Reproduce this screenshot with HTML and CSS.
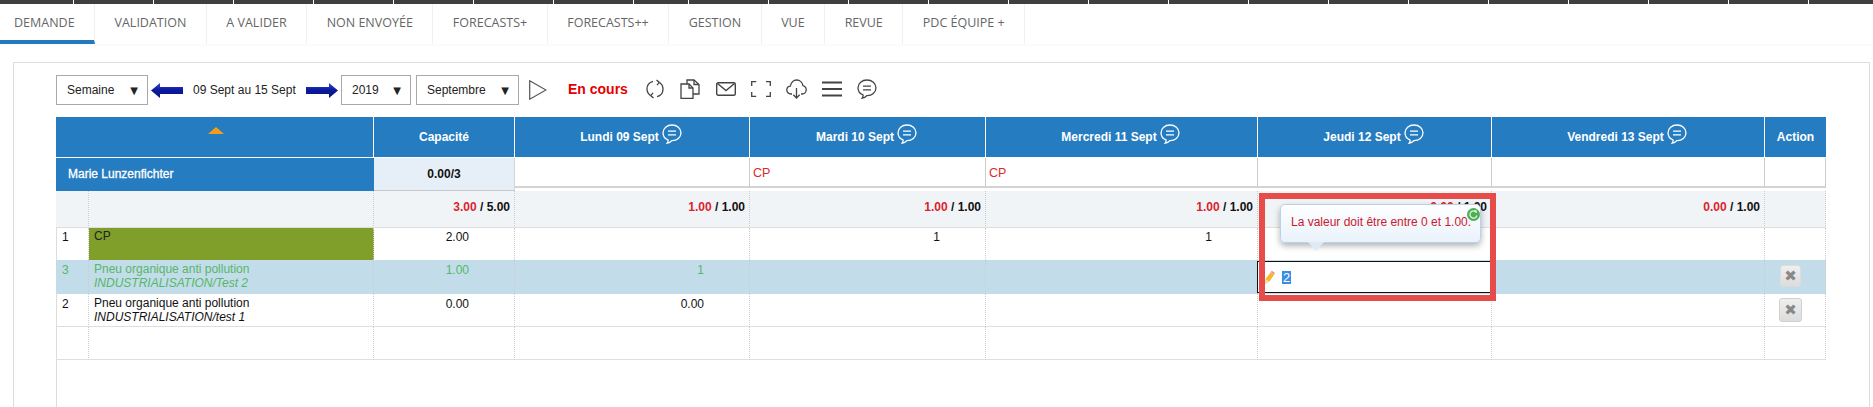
FILE: index.html
```html
<!DOCTYPE html>
<html lang="fr">
<head>
<meta charset="utf-8">
<title>Demande</title>
<link rel="stylesheet" href="styles.css">
</head>
<body>
<svg class="defs" width="0" height="0" aria-hidden="true">
  <defs>
    <linearGradient id="arrowFill" x1="0" y1="0" x2="0" y2="1">
      <stop offset="0" stop-color="#3a49c8"/>
      <stop offset="0.45" stop-color="#0b1aa2"/>
      <stop offset="1" stop-color="#0a1478"/>
    </linearGradient>
    <symbol id="chat" viewBox="0 0 20 20">
      <path d="M10 1C5 1 1 4.200 1 8.800c0 3.400 2.100 6 5 7.100.2 1 0 2.200-.8 3.300 1.900-.3 3.500-1.300 4.600-2.600 5.200.2 9.200-3.300 9.200-7.800C19 4.300 15 1 10 1z" fill="none" stroke="currentColor" stroke-width="1.300"/>
      <path d="M6 7.200h8M6 10.800h8" fill="none" stroke="currentColor" stroke-width="1.300"/>
    </symbol>
  </defs>
</svg>

<div class="topbar"><span class="ticks-a"></span><span class="ticks-b"></span></div>

<nav class="tabs">
  <a class="tab active">DEMANDE</a>
  <a class="tab">VALIDATION</a>
  <a class="tab">A VALIDER</a>
  <a class="tab">NON ENVOYÉE</a>
  <a class="tab">FORECASTS+</a>
  <a class="tab">FORECASTS++</a>
  <a class="tab">GESTION</a>
  <a class="tab">VUE</a>
  <a class="tab">REVUE</a>
  <a class="tab">PDC ÉQUIPE +</a>
</nav>

<main class="panel">
  <div class="toolbar">
    <div class="select sel-week"><span>Semaine</span><span class="caret">▼</span></div>
    <svg class="arrow arrow-prev" width="32" height="15" viewBox="0 0 32 15"><path d="M0 7.500 9 0v4h23v7H9v4z" fill="url(#arrowFill)"/></svg>
    <span class="range">09 Sept au 15 Sept</span>
    <svg class="arrow arrow-next" width="32" height="15" viewBox="0 0 32 15"><path d="M32 7.500 23 0v4H0v7h23v4z" fill="url(#arrowFill)"/></svg>
    <div class="select sel-year"><span>2019</span><span class="caret">▼</span></div>
    <div class="select sel-month"><span>Septembre</span><span class="caret">▼</span></div>
    <svg class="play" width="18" height="20" viewBox="0 0 18 20"><path d="M.7.800 17 10 .7 19.200z" fill="none" stroke="#555" stroke-width="1.200"/></svg>
    <span class="status">En cours</span>
    <svg class="tool t-refresh" width="18" height="20" viewBox="0 0 18 20" fill="none" stroke="#444" stroke-width="1.300"><path d="M7 2.300C3.500 3.200 1 6.300 1 10c0 2.700 1.300 5 3.400 6.500"/><path d="M11 17.700c3.500-.9 6-4 6-7.700 0-2.700-1.300-5-3.400-6.500"/><path d="M10.500 1 13.300 3.400 11 6.200"/><path d="M7.500 19 4.700 16.600 7 13.800"/></svg>
    <svg class="tool t-doc" width="20" height="20" viewBox="0 0 20 20" fill="none" stroke="#444" stroke-width="1.300"><path d="M1 5h8l4 4v10.300H1z"/><path d="M9 5v4h4"/><path d="M7 5V1h7l5 4.500V15h-6"/><path d="M14 1v4.500h5"/></svg>
    <svg class="tool t-mail" width="20" height="14" viewBox="0 0 20 14" fill="none" stroke="#444" stroke-width="1.400"><rect x=".7" y=".7" width="18.600" height="12.600" rx="1.500"/><path d="M1.500 1.500 10 8.500l8.500-7"/></svg>
    <svg class="tool t-full" width="20" height="16" viewBox="0 0 20 16" fill="none" stroke="#444" stroke-width="1.300"><path d="M.7 5V.7h4.500M15 .7h4.300V5M19.300 11v4.300H15M5.200 15.300H.7V11"/></svg>
    <svg class="tool t-cloud" width="21" height="20" viewBox="0 0 21 20" fill="none" stroke="#444" stroke-width="1.300"><path d="M6 15H5C2.500 15 .8 13.200.8 11c0-2 1.500-3.700 3.500-3.900C4.900 3.600 7.500 1 10.700 1c3.300 0 5.800 2.500 6.200 5.600 2 .5 3.300 2.200 3.300 4.200 0 2.300-1.800 4.200-4.200 4.200H15"/><path d="M10.500 9v10M7.300 15.800l3.200 3.200 3.200-3.200"/></svg>
    <svg class="tool t-menu" width="20" height="16" viewBox="0 0 20 16" fill="none" stroke="#444" stroke-width="2"><path d="M0 1.500h20M0 8h20M0 14.500h20"/></svg>
    <svg class="tool t-chat" width="20" height="20"><use href="#chat"/></svg>
  </div>

  <div class="table-wrap">
    <table class="grid">
      <colgroup>
        <col class="c-num"><col class="c-name"><col class="c-cap"><col class="c-mon"><col class="c-tue"><col class="c-wed"><col class="c-thu"><col class="c-fri"><col class="c-act">
      </colgroup>
      <thead>
        <tr class="r-head">
          <th colspan="2" class="sort-cell"><span class="sort-up"></span></th>
          <th>Capacité</th>
          <th><span class="day">Lundi 09 Sept<svg class="day-chat" width="20" height="20"><use href="#chat"/></svg></span></th>
          <th><span class="day">Mardi 10 Sept<svg class="day-chat" width="20" height="20"><use href="#chat"/></svg></span></th>
          <th><span class="day">Mercredi 11 Sept<svg class="day-chat" width="20" height="20"><use href="#chat"/></svg></span></th>
          <th><span class="day">Jeudi 12 Sept<svg class="day-chat" width="20" height="20"><use href="#chat"/></svg></span></th>
          <th><span class="day">Vendredi 13 Sept<svg class="day-chat" width="20" height="20"><use href="#chat"/></svg></span></th>
          <th>Action</th>
        </tr>
      </thead>
      <tbody>
        <tr class="r-person">
          <td colspan="2" class="person">Marie Lunzenfichter</td>
          <td class="cap-total">0.00/3</td>
          <td><div class="absence"></div></td>
          <td><div class="absence">CP</div></td>
          <td><div class="absence">CP</div></td>
          <td><div class="absence"></div></td>
          <td><div class="absence"></div></td>
          <td><div class="absence"></div></td>
        </tr>
        <tr class="r-sum">
          <td></td><td></td>
          <td class="sum"><b class="used">3.00</b> / 5.00</td>
          <td class="sum"><b class="used">1.00</b> / 1.00</td>
          <td class="sum"><b class="used">1.00</b> / 1.00</td>
          <td class="sum"><b class="used">1.00</b> / 1.00</td>
          <td class="sum"><b class="used">0.00</b> / 1.00</td>
          <td class="sum"><b class="used">0.00</b> / 1.00</td>
          <td></td>
        </tr>
        <tr class="r-cp">
          <td class="idx">1</td>
          <td class="label cp-label">CP</td>
          <td class="num">2.00</td>
          <td class="num"></td>
          <td class="num">1</td>
          <td class="num">1</td>
          <td class="num"></td><td class="num"></td><td></td>
        </tr>
        <tr class="r-sel">
          <td class="idx">3</td>
          <td class="label">Pneu organique anti pollution<br><i>INDUSTRIALISATION/Test 2</i></td>
          <td class="num">1.00</td>
          <td class="num">1</td>
          <td class="num"></td>
          <td class="num"></td>
          <td class="edit-cell">
            <div class="editor">
              <svg class="pencil" width="10" height="13" viewBox="0 0 10 13"><path d="M0 13 .6 8 5.800 .9 9.300 3.400 4.200 10.800z" fill="#f5b82e"/><path d="M5.800 .9 6.300 .3c.4-.4.900-.4 1.300-.1l1.800 1.300c.4.400.4.900.1 1.300l-.2.600z" fill="#e58bb5"/><path d="M0 13 .6 8 4.200 10.800z" fill="#f7e3b0"/></svg>
              <span class="picked">2</span>
            </div>
          </td>
          <td class="num"></td>
          <td class="act"><button class="del sm">✖</button></td>
        </tr>
        <tr class="r-row">
          <td class="idx">2</td>
          <td class="label">Pneu organique anti pollution<br><i>INDUSTRIALISATION/test 1</i></td>
          <td class="num">0.00</td>
          <td class="num">0.00</td>
          <td class="num"></td><td class="num"></td><td class="num"></td><td class="num"></td>
          <td class="act"><button class="del">✖</button></td>
        </tr>
        <tr class="r-empty">
          <td></td><td></td><td></td><td></td><td></td><td></td><td></td><td></td><td></td>
        </tr>
      </tbody>
    </table>

    <div class="callout"></div>
    <div class="tip">
      <span>La valeur doit être entre 0 et 1.00.</span>
      <svg class="tip-ok" width="13" height="13" viewBox="0 0 13 13"><circle cx="6.500" cy="6.500" r="6.500" fill="#4cae55"/><path d="M9.500 4.500A3.600 3.600 0 1 0 10 7.500" fill="none" stroke="#d9f2dc" stroke-width="1.300"/><path d="M6.300 3.200 9.500 1.800l.3 3.400z" fill="#d9f2dc"/></svg>
    </div>
  </div>
</main>
</body>
</html>
```
FILE: styles.css
```css
* { box-sizing: border-box; }
html, body { height: 407px; margin: 0; overflow: hidden; }
body {
  display: flex;
  flex-direction: column;
  background: #fff;
  font: 12px/14px "Liberation Sans", Arial, sans-serif;
  color: #111;
}
.defs { position: absolute; }

.topbar { display: flex; height: 4px; flex: none; }
.ticks-a, .ticks-b {
  height: 100%;
  background-size: 80px 100%;
}
.ticks-a {
  width: 640px;
  background-image: linear-gradient(90deg, #3f3f3f 73px, #fff 73px, #fff 74px, #3f3f3f 74px);
}
.ticks-b {
  flex: 1;
  background-image: linear-gradient(90deg, #3f3f3f 48px, #fff 48px, #fff 49px, #3f3f3f 49px);
}

.tabs {
  display: flex;
  flex: none;
  height: 40px;
  background: #fff;
  box-shadow: 0 1px 3px rgba(0, 0, 0, .04);
}
.tab {
  display: flex;
  align-items: center;
  padding: 0 19.500px 3px;
  border-right: 1px solid #f0f0f0;
  font: 12.500px "Open Sans", sans-serif;
  color: #666;
}
.tab.active {
  padding-left: 14px;
  border-bottom: 4px solid #2379bd;
  padding-bottom: 0;
  width: 95px;
  padding-right: 0;
}

.panel {
  flex: 1;
  display: flex;
  flex-direction: column;
  margin: 18px 3px 0 13px;
  padding: 12px 42px 0;
  border: 1px solid #dcdcdc;
  border-bottom: 0;
  min-height: 0;
}
.toolbar { display: flex; align-items: center; height: 30px; flex: none; }
.select {
  display: flex;
  align-items: center;
  justify-content: space-between;
  height: 30px;
  padding: 0 9px 0 10px;
  border: 1px solid #a9a9a9;
  background: #fff;
  color: #222;
}
.sel-week { width: 92px; }
.sel-year { width: 70px; }
.sel-month { width: 103px; margin-left: 5px; }
.caret { font: 10px "DejaVu Sans", sans-serif; color: #222; }
.arrow-prev { margin-left: 3px; }
.range { margin-left: 10px; width: 103px; white-space: nowrap; color: #222; }
.arrow-next { margin: 0 3px 0 10px; }
.play { margin-left: 10px; margin-bottom: 0; }
.status {
  margin-left: 21px;
  width: 60px;
  font-size: 14px;
  font-weight: bold;
  color: #e40000;
  white-space: nowrap;
  margin-bottom: 2px;
}
.tool { flex: none; margin-bottom: 2px; }
.t-refresh { margin-left: 18px; }
.t-doc { margin-left: 16px; }
.t-mail { margin-left: 16px; }
.t-full { margin-left: 15px; }
.t-cloud { margin-left: 15px; }
.t-menu { margin-left: 15px; }
.t-chat { margin-left: 15px; color: #444; }

.table-wrap {
  position: relative;
  flex: 1;
  margin-top: 12px;
  background: linear-gradient(#dcdcdc, #dcdcdc) left top / 1px 100% no-repeat;
}
.grid {
  width: 1770px;
  table-layout: fixed;
  border-collapse: separate;
  border-spacing: 0;
}
.c-num { width: 33px; }
.c-name { width: 285px; }
.c-cap { width: 141px; }
.c-mon { width: 235px; }
.c-tue { width: 236px; }
.c-wed { width: 272px; }
.c-thu { width: 234px; }
.c-fri { width: 273px; }
.c-act { width: 61px; }

th, td { padding: 0; }
.r-head { height: 41px; }
.r-head th {
  background: #257cc1;
  background-clip: padding-box;
  color: #fff;
  font-weight: bold;
  border-right: 1px solid #fff;
  border-bottom: 1px solid #fff;
  text-align: center;
  vertical-align: middle;
}
.r-head th:last-child { border-right: 0; }
.sort-cell { vertical-align: top !important; padding-top: 10px; }
.sort-up {
  display: block;
  width: 0;
  height: 0;
  margin: 0 auto;
  position: relative;
  left: 1px;
  border-left: 8px solid transparent;
  border-right: 8px solid transparent;
  border-bottom: 7px solid #f59c1a;
}
.day { display: inline-flex; align-items: center; gap: 3px; margin-right: 2px; }
.day-chat { margin-top: -6px; color: #fff; }

.r-person { height: 33px; }
.r-person td { vertical-align: top; }
.person {
  background: #257cc1;
  color: #fff;
  padding: 9px 0 0 12px;
  font-weight: normal;
  -webkit-text-stroke: .3px #fff;
}
.cap-total {
  background: #e6eff8;
  border-bottom: 1px solid #c4c8cc;
  border-right: 1px solid #d4d8dc;
  text-align: center;
  font-weight: bold;
  padding-top: 9px;
}
.absence {
  height: 30px;
  padding: 8px 0 0 3px;
  border-right: 1px solid #ccc;
  border-bottom: 2px solid #d4d4d4;
  color: #d92b2b;
  font-size: 12.500px;
}

.r-sum { height: 37px; background: #f1f4f6; }
.r-sum td { border-right: 1px dotted #ccc; border-bottom: 1px solid #dedede; }
.sum { text-align: right; padding: 0 4px 4px 0; font-weight: bold; }
.used { color: #dc1f2e; }

.r-cp { height: 32px; }
.r-sel { height: 34px; background: #c3dcea; color: #55b866; }
.r-row { height: 33px; }
.r-empty { height: 33px; }
.r-row td, .r-empty td { border-bottom: 1px solid #dedede; }
.r-cp td, .r-sel td, .r-row td, .r-empty td {
  border-right: 1px dotted #ccc;
  vertical-align: top;
}
.idx { padding: 3px 0 0 6px; }
.label { padding: 2px 0 0 5px; }
.cp-label { background: #7f9f2a; color: #222; padding-top: 1px; }
.num { padding: 3px 45px 0 0; text-align: right; }
.r-cp .idx, .r-cp .num { padding-top: 2px; }

.edit-cell { vertical-align: top; padding: 0; }
.editor {
  display: flex;
  align-items: center;
  height: 32px;
  margin: 1px 0 0 -1px;
  padding-left: 7px;
  gap: 7px;
  background: #fff;
  border: 1px solid #111;
  color: #222;
}
.picked { background: #3a8ee6; color: #fff; padding: 0 1px; font-size: 13px; line-height: 13px; }

.act { padding: 5px 0 0 14px; }
.del {
  display: flex;
  align-items: center;
  justify-content: center;
  width: 23px;
  height: 24px;
  padding: 0;
  border: 1px solid #d0d0d0;
  border-radius: 3px;
  background: linear-gradient(#efefef, #dcdcdc);
  color: #888;
  font: 15px "DejaVu Sans", sans-serif;
}
.del.sm { width: 21px; height: 22px; margin-left: 1px; border-color: #dcdcdc; }
.r-row .act { padding-top: 4px; }

.callout {
  position: absolute;
  left: 1203px;
  top: 76px;
  width: 237px;
  height: 108px;
  border: 6px solid #e54c4a;
  pointer-events: none;
}
.tip {
  position: absolute;
  left: 1224px;
  top: 87px;
  width: 201px;
  height: 39px;
  padding: 10px 0 0 10px;
  background: linear-gradient(#fff, #e9f2fb);
  border: 1px solid #b9d2ea;
  border-radius: 5px;
  box-shadow: 0 3px 6px rgba(0, 0, 0, .3);
  color: #c9192e;
  white-space: nowrap;
}
.tip::after {
  content: "";
  position: absolute;
  left: 27px;
  top: 37px;
  width: 0;
  height: 0;
  border-left: 8px solid transparent;
  border-right: 8px solid transparent;
  border-top: 9px solid #dfeaf6;
}
.tip-ok { position: absolute; right: 0; top: 3px; }
```
